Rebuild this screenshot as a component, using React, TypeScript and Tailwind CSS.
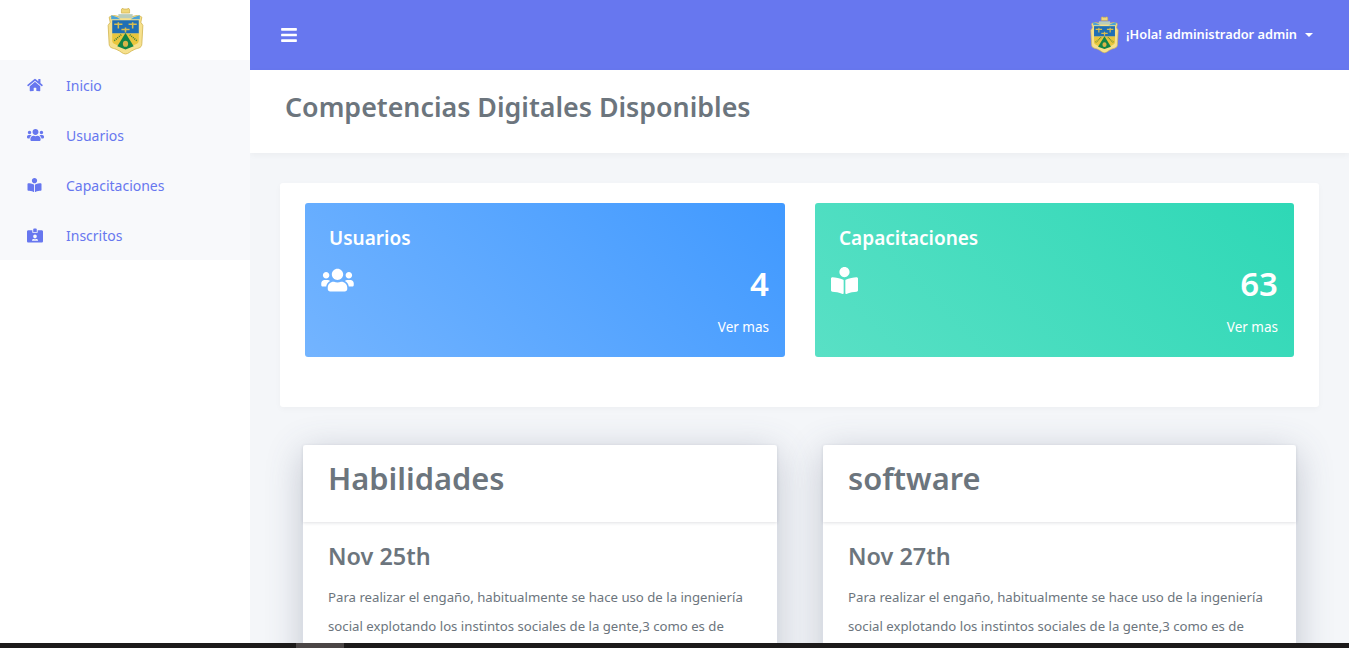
import { FaBars, FaBookReader, FaHome, FaIdCardAlt, FaUsers } from "react-icons/fa";

const Crest = ({ className }: { className: string }) => (
  <svg viewBox="1 2 36 46" className={className} aria-hidden="true">
    <path d="M15 4c0-2 2-2 2-1h4c0-1 2-1 2 1v3h-8z" fill="#f0d77a" stroke="#c9a93f" strokeWidth=".6" />
    <path d="M3 11c4-3 8-1 11 0h10c3-1 7-3 11 0l-1 5 2 3-1 18c0 5-5 4-8 6-3 1-5 4-8 4s-5-3-8-4c-3-2-8-1-8-6L2 19l2-3z" fill="#f6e08c" stroke="#d2b552" strokeWidth=".8" />
    <path d="M5 9l6 2 3 2H5z M33 9l-6 2-3 2h9z" fill="#4aa3d8" />
    <rect x="12" y="8" width="14" height="4" fill="#b9cdbb" />
    <path d="M6 14h26v13H6z" fill="#1f6fb5" />
    <path d="M6 27h26v7c0 3-4 4-7 5l-6 3-6-3c-3-1-7-2-7-5z" fill="#e9c63c" />
    <path d="M11 39.500l8-13 8 13-8 3z" fill="#128447" />
    <rect x="16.500" y="34" width="5" height="6" rx="2.500" fill="#d9b54a" />
    <path d="M8 18h8M12 16v6M22 18h8M26 16v6M15 23h8M19 21v5" stroke="#d9bd4e" strokeWidth="1.500" />
    <path d="M8 34l7-6M30 34l-7-6" stroke="#3b7d37" strokeWidth="1.500" strokeDasharray="1 1" />
  </svg>
);

const nav = [
  { label: "Inicio", Icon: FaHome, size: "h-[14px] w-[16px]" },
  { label: "Usuarios", Icon: FaUsers, size: "h-[14px] w-[17px]" },
  { label: "Capacitaciones", Icon: FaBookReader, size: "h-[14px] w-[15px]" },
  { label: "Inscritos", Icon: FaIdCardAlt, size: "h-[15px] w-[16px]" },
];

const body = "Para realizar el engaño, habitualmente se hace uso de la ingeniería social explotando los instintos sociales de la gente,3 como es de";

const Stat = ({ title, value, gradient, width, Icon, iconClass }: { title: string; value: string; gradient: string; width: string; Icon: typeof FaUsers; iconClass: string }) => (
  <div className={`flex h-[154px] flex-col rounded-[3px] pl-4 pr-4 text-white ${width} ${gradient}`}>
    <h3 className="mt-[21px] pl-2 text-[19px] leading-[28px] font-semibold">{title}</h3>
    <div className="mt-[15px] flex items-start justify-between">
      <Icon className={iconClass} />
      <span className="-mt-[2px] text-[33px] leading-[38px] font-semibold">{value}</span>
    </div>
    <p className="mt-[14px] text-right text-[13.500px] leading-[20px]">Ver mas</p>
  </div>
);

const Card = ({ title, date, width }: { title: string; date: string; width: string }) => (
  <article className={`h-[280px] rounded-[3px] bg-white shadow-[0_8px_36px_rgba(70,80,110,0.3)] ${width}`}>
    <header className="h-[77px] px-[25px] pt-[10px] shadow-[0_1px_3px_rgba(60,70,90,0.16)]">
      <h2 className="text-[30.800px] leading-[46px] font-semibold text-[#6c757d]">{title}</h2>
    </header>
    <div className="px-[25px] pt-[17px]">
      <h3 className="text-[23.400px] leading-[34px] font-semibold text-[#6c757d]">{date}</h3>
      <p className="mt-[10px] text-[13.200px] leading-[29px] text-[#6c757d]">{body}</p>
    </div>
  </article>
);

export default function App() {
  return (
    <div className="flex h-[648px] flex-col overflow-hidden bg-white font-['Noto_Sans',sans-serif]">
      <div className="flex min-h-0 flex-1">
        <aside className="w-[250px] shrink-0 bg-white">
          <div className="flex h-[60px] items-center justify-center pt-[3px]">
            <Crest className="h-[47px] w-[37px]" />
          </div>
          <nav className="bg-[#f8f9fb]">
            {nav.map(({ label, Icon, size }) => (
              <a key={label} className="flex h-[50px] items-center pl-[27px] text-[14px] text-[#6777ef]">
                <span className="flex w-[39px] shrink-0">
                  <Icon className={size} />
                </span>
                {label}
              </a>
            ))}
          </nav>
        </aside>
        <main className="flex min-w-0 flex-1 flex-col overflow-hidden bg-[#f4f6f9]">
          <div className="flex h-[70px] shrink-0 items-center justify-between bg-[#6777ef] pr-[36px] pl-[31px] text-white">
            <FaBars className="h-[18px] w-[16px]" />
            <div className="-mt-[1px] flex items-center text-[12.800px] font-semibold">
              <Crest className="mr-[7px] h-[38px] w-[29px]" />
              <span>¡Hola! administrador admin</span>
              <span className="ml-[8px] h-0 w-0 border-x-[4px] border-t-[4px] border-x-transparent border-t-white" />
            </div>
          </div>
          <div className="h-[83px] shrink-0 bg-white pl-[35px] shadow-[0_2px_6px_rgba(0,0,0,0.04)]">
            <h1 className="pt-[17px] text-[26.800px] leading-[40px] font-semibold text-[#6c757d]">Competencias Digitales Disponibles</h1>
          </div>
          <div className="ml-[30px] mt-[30px] flex h-[224px] w-[1039px] shrink-0 gap-[30px] rounded-[3px] bg-white pt-[20px] pl-[25px] shadow-[0_2px_6px_rgba(0,0,0,0.03)]">
            <Stat title="Usuarios" value="4" width="w-[480px]" gradient="bg-[linear-gradient(45deg,#73b4ff,#4099ff)]" Icon={FaUsers} iconClass="h-[26px] w-[33px]" />
            <Stat title="Capacitaciones" value="63" width="w-[479px]" gradient="bg-[linear-gradient(45deg,#59e0c5,#2ed8b6)]" Icon={FaBookReader} iconClass="h-[27px] w-[27px]" />
          </div>
          <div className="ml-[53px] mt-[38px] flex shrink-0 gap-[46px]">
            <Card title="Habilidades" date="Nov 25th" width="w-[474px]" />
            <Card title="software" date="Nov 27th" width="w-[473px]" />
          </div>
        </main>
      </div>
      <div className="flex h-[5px] shrink-0 bg-[#1c1a1a]">
        <div className="ml-[296px] w-[48px] bg-[#4a4545]" />
      </div>
    </div>
  );
}
